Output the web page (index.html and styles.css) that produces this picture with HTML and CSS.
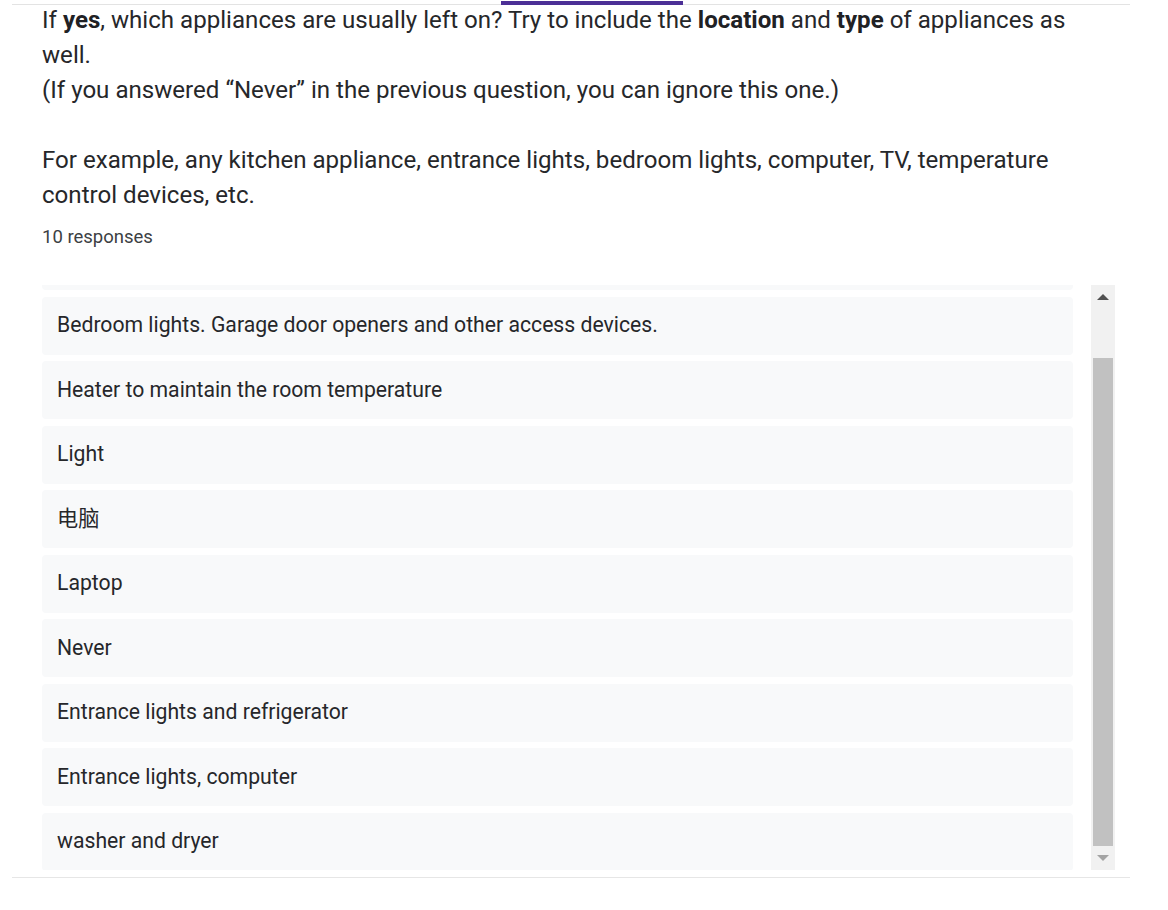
FILE: index.html
```html
<!DOCTYPE html>
<html lang="en">
<head>
<meta charset="utf-8">
<title>Responses</title>
<link rel="stylesheet" href="styles.css">
</head>
<body>
<div class="card">
  <div class="tabbar"><div class="indicator"></div></div>
  <div class="question">
    <p>If <b>yes</b>, which appliances are usually left on? Try to include the <b>location</b> and <b>type</b> of appliances as well.</p>
    <p>(If you answered “Never” in the previous question, you can ignore this one.)</p>
    <p class="blank">&nbsp;</p>
    <p>For example, any kitchen appliance, entrance lights, bedroom lights, computer, TV, temperature control devices, etc.</p>
  </div>
  <div class="count">10 responses</div>
  <div class="viewport">
    <div class="list">
      <div class="sliver"></div>
      <div class="item">Bedroom lights. Garage door openers and other access devices.</div>
      <div class="item">Heater to maintain the room temperature</div>
      <div class="item">Light</div>
      <div class="item">电脑</div>
      <div class="item">Laptop</div>
      <div class="item">Never</div>
      <div class="item">Entrance lights and refrigerator</div>
      <div class="item">Entrance lights, computer</div>
      <div class="item">washer and dryer</div>
    </div>
    <div class="scrollbar">
      <div class="sb-btn"><span class="arrow-up"></span></div>
      <div class="sb-track"><div class="sb-thumb"></div></div>
      <div class="sb-btn"><span class="arrow-down"></span></div>
    </div>
  </div>
</div>
</body>
</html>
```
FILE: styles.css
```css
html, body {
  margin: 0;
  padding: 0;
  background: #ffffff;
}
body {
  font-family: Roboto, "Noto Sans CJK SC", sans-serif;
  color: #202124;
}
.card {
  margin-left: 12px;
  width: 1118px;
  border-bottom: 1px solid #e6e6e6;
  padding-bottom: 7px;
}
.tabbar {
  height: 5px;
  box-shadow: inset 0 -1px 0 #e3e3e3;
  display: flex;
}
.indicator {
  margin-left: 489px;
  margin-top: 1px;
  width: 182px;
  height: 4px;
  background: #4c2f96;
}
.question {
  margin-left: 30px;
  width: 1031px;
  font-size: 24.1px;
  line-height: 35px;
  margin-top: -2px;
  color: #26272a;
}
.question p {
  margin: 0;
}
.question b {
  font-weight: 700;
  color: #202124;
}
.count {
  margin-left: 30px;
  margin-top: 12px;
  font-size: 18.5px;
  line-height: 24px;
  color: #3c4043;
}
.viewport {
  margin-top: 36px;
  height: 585px;
  display: flex;
  overflow: hidden;
}
.list {
  margin-left: 30px;
  width: 1031px;
  display: flex;
  flex-direction: column;
  gap: 6.5px;
}
.sliver {
  flex: none;
  height: 5px;
  background: #f8f9fa;
  border-radius: 0 0 4px 4px;
}
.item {
  flex: none;
  height: 58px;
  box-sizing: border-box;
  padding-left: 15px;
  padding-bottom: 1px;
  display: flex;
  align-items: center;
  background: #f8f9fa;
  border-radius: 4px;
  font-size: 21.2px;
  line-height: 28px;
  color: #26272a;
}
.scrollbar {
  margin-left: 18px;
  width: 24px;
  height: 585px;
  background: #f1f1f1;
  display: flex;
  flex-direction: column;
}
.sb-btn {
  height: 24px;
  flex: none;
  display: flex;
  align-items: center;
  justify-content: center;
}
.arrow-up {
  width: 0;
  height: 0;
  border-left: 6px solid transparent;
  border-right: 6px solid transparent;
  border-bottom: 6px solid #505050;
}
.arrow-down {
  width: 0;
  height: 0;
  border-left: 6px solid transparent;
  border-right: 6px solid transparent;
  border-top: 6px solid #a3a3a3;
}
.sb-track {
  flex: 1;
  display: flex;
  flex-direction: column;
  justify-content: flex-end;
  align-items: center;
}
.sb-thumb {
  width: 20px;
  height: 488px;
  background: #c1c1c1;
}
```
